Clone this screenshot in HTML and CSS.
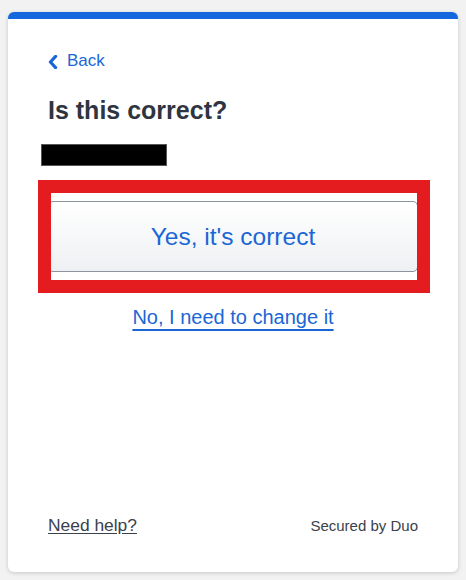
FILE: index.html
```html
<!DOCTYPE html>
<html lang="en">
<head>
<meta charset="utf-8">
<title>Is this correct?</title>
<link rel="stylesheet" href="styles.css">
</head>
<body>
<main class="card">
  <a class="back" href="#">
    <svg class="chev" width="10" height="14" viewBox="0 0 10 14" aria-hidden="true"><path d="M7.6 1.4 L2.4 7 L7.6 12.6" fill="none" stroke="#1a66d6" stroke-width="3.2" stroke-linecap="round" stroke-linejoin="round"/></svg>
    <span>Back</span>
  </a>
  <h1 class="title">Is this correct?</h1>
  <div class="redacted"></div>
  <button class="confirm" type="button">Yes, it's correct</button>
  <a class="change" href="#">No, I need to change it</a>
  <footer class="foot">
    <a class="help" href="#">Need help?</a>
    <span class="secured">Secured by Duo</span>
  </footer>
</main>
<div class="highlight"></div>
</body>
</html>
```

FILE: styles.css
```css
* { box-sizing: border-box; }
html, body { margin: 0; padding: 0; }
body {
  background: #f2f2f2;
  font-family: "Liberation Sans", Arial, sans-serif;
  width: 466px;
  height: 580px;
  overflow: hidden;
}
.card {
  margin: 12px 8px 0 8px;
  width: 450px;
  height: 560px;
  background: #ffffff;
  border-top: 7px solid #1467dc;
  border-radius: 6px;
  box-shadow: 0 1px 4px rgba(0,0,0,0.18);
  padding: 32px 40px 36px 40px;
  display: flex;
  flex-direction: column;
}
.back {
  display: flex;
  align-items: center;
  gap: 9px;
  color: #1a66d6;
  text-decoration: none;
  font-size: 17px;
  line-height: 20px;
  height: 20px;
}
.chev { display: block; margin-top: 1px; }
.title {
  margin: 24px 0 0 0;
  font-size: 25px;
  line-height: 30px;
  font-weight: bold;
  color: #2f3540;
}
.redacted {
  margin: 19px 0 0 -7px;
  width: 126px;
  height: 22px;
  background: #000;
  border: 1px solid #555;
}
.confirm {
  margin-top: 35px;
  width: 370px;
  height: 71px;
  border: 1px solid #8d939c;
  border-radius: 5px;
  background: linear-gradient(#ffffff, #eef0f3);
  color: #1a66d6;
  font-family: "Liberation Sans", Arial, sans-serif;
  font-size: 24.5px;
  padding: 0;
}
.change {
  margin-top: 33px;
  align-self: center;
  color: #1a66d6;
  font-size: 20px;
  line-height: 24px;
  text-decoration: underline;
  text-decoration-thickness: 2px;
  text-underline-offset: 5px;
}
.foot {
  margin-top: auto;
  display: flex;
  justify-content: space-between;
  align-items: baseline;
}
.help {
  color: #3a414d;
  font-size: 17.4px;
  line-height: 20px;
  text-decoration: underline;
  text-underline-offset: 2px;
}
.secured {
  color: #3a414d;
  font-size: 15px;
  line-height: 20px;
}
.highlight {
  position: absolute;
  left: 38px;
  top: 180px;
  width: 392px;
  height: 113px;
  border: 13px solid #e41c1f;
}
```
